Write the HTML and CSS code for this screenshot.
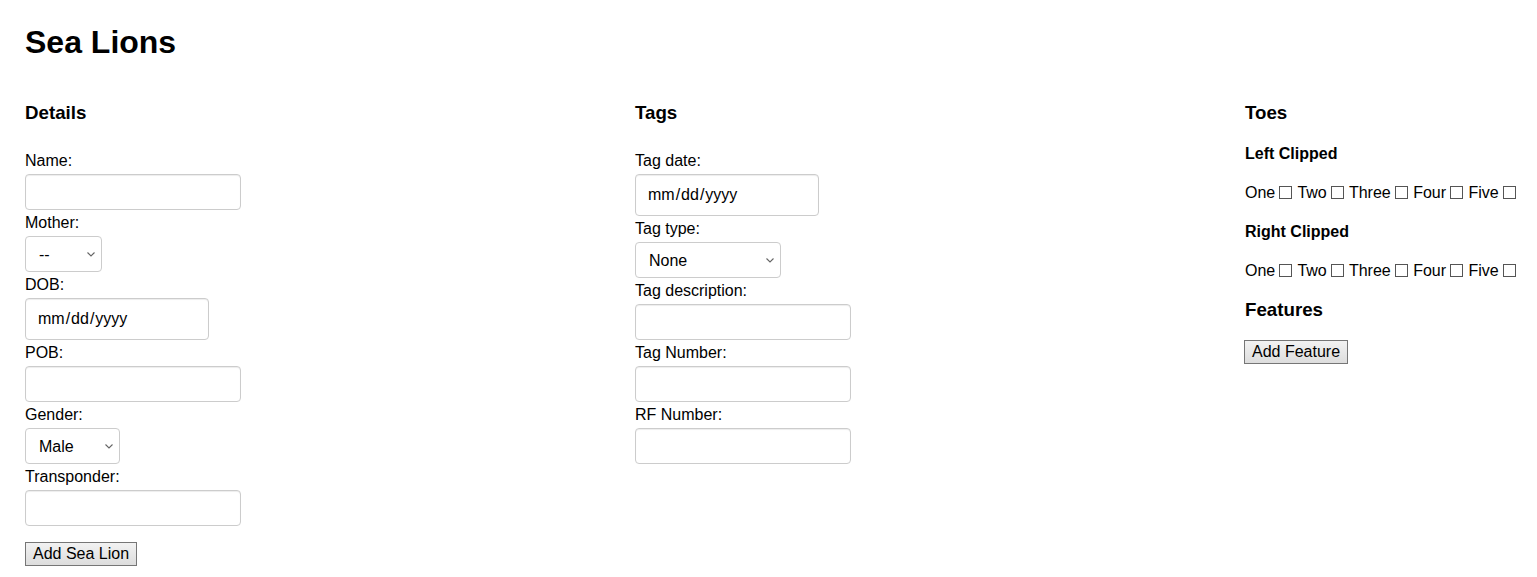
FILE: index.html
```html
<!DOCTYPE html>
<html lang="en">
<head>
<meta charset="utf-8">
<title>Sea Lions</title>
<link rel="stylesheet" href="styles.css">
</head>
<body>
<h1 class="page-title">Sea Lions</h1>
<div class="columns">
  <section class="col">
    <h3 class="col-title">Details</h3>
    <form class="fields">
      <label class="field-label">Name:</label>
      <input class="control text" type="text">
      <label class="field-label">Mother:</label>
      <select class="control select sel-mother"><option>--</option></select>
      <label class="field-label">DOB:</label>
      <input class="control date" type="date">
      <label class="field-label">POB:</label>
      <input class="control text" type="text">
      <label class="field-label">Gender:</label>
      <select class="control select sel-gender"><option>Male</option><option>Female</option></select>
      <label class="field-label">Transponder:</label>
      <input class="control text" type="text">
      <button class="btn btn-submit" type="button">Add Sea Lion</button>
    </form>
  </section>
  <section class="col">
    <h3 class="col-title">Tags</h3>
    <div class="fields">
      <label class="field-label">Tag date:</label>
      <input class="control date" type="date">
      <label class="field-label">Tag type:</label>
      <select class="control select sel-tag"><option>None</option></select>
      <label class="field-label">Tag description:</label>
      <input class="control text" type="text">
      <label class="field-label">Tag Number:</label>
      <input class="control text" type="text">
      <label class="field-label">RF Number:</label>
      <input class="control text" type="text">
    </div>
  </section>
  <section class="col">
    <h3 class="col-title">Toes</h3>
    <h4 class="sub-title">Left Clipped</h4>
    <div class="toe-row"><label>One<input class="toe" type="checkbox"></label> <label>Two<input class="toe" type="checkbox"></label> <label>Three<input class="toe" type="checkbox"></label> <label>Four<input class="toe" type="checkbox"></label> <label>Five<input class="toe" type="checkbox"></label></div>
    <h4 class="sub-title">Right Clipped</h4>
    <div class="toe-row"><label>One<input class="toe" type="checkbox"></label> <label>Two<input class="toe" type="checkbox"></label> <label>Three<input class="toe" type="checkbox"></label> <label>Four<input class="toe" type="checkbox"></label> <label>Five<input class="toe" type="checkbox"></label></div>
    <h3 class="section-title">Features</h3>
    <button class="btn btn-feature" type="button">Add Feature</button>
  </section>
</div>
</body>
</html>
```

FILE: styles.css
```css
html, body {
  margin: 0;
  padding: 0;
  background: #fff;
}
body {
  font-family: "Liberation Sans", Arial, sans-serif;
  font-size: 16px;
  color: #000;
  padding-left: 25px;
  overflow: hidden;
}
.page-title {
  font-size: 32px;
  line-height: 37px;
  font-weight: bold;
  margin: 24px 0 40px;
}
.columns {
  display: grid;
  grid-template-columns: 610px 610px 1fr;
}
.col {
  min-width: 0;
}
.col-title,
.section-title {
  font-size: 18.72px;
  line-height: normal;
  font-weight: bold;
  margin: 0;
}
.col-title {
  margin-top: 1px;
}
.section-title {
  margin-top: 19px;
}
.fields {
  display: flex;
  flex-direction: column;
  align-items: flex-start;
  margin-top: 24px;
}
.field-label {
  display: block;
  line-height: 18px;
  margin: 4px 0;
}
.control {
  box-sizing: border-box;
  font-family: "Liberation Sans", Arial, sans-serif;
  font-size: 16px;
  color: #000;
  background: #fff;
  border: 1px solid #ccc;
  border-radius: 4px;
  box-shadow: inset 0 1px 1px rgba(0, 0, 0, 0.075);
  margin: 0;
  outline: none;
}
.text {
  width: 216px;
  height: 36px;
  padding: 0 11px;
}
.date {
  width: 184px;
  height: 42px;
  padding: 0 11px;
}
.date::-webkit-calendar-picker-indicator {
  display: none;
}
.date::-webkit-inner-spin-button {
  display: none;
}
.date::-webkit-datetime-edit {
  padding: 0;
}
.select {
  -webkit-appearance: none;
  appearance: none;
  height: 36px;
  padding: 0 20px 0 13px;
  box-shadow: none;
  background-image: url("data:image/svg+xml;utf8,<svg xmlns='http://www.w3.org/2000/svg' width='8' height='5' viewBox='0 0 8 5'><polyline points='0.5,0.5 4,4 7.5,0.5' fill='none' stroke='%23666' stroke-width='1.1'/></svg>");
  background-repeat: no-repeat;
  background-position: right 6px center;
  background-size: 8px 5px;
}
.sel-mother { width: 77px; }
.sel-gender { width: 95px; }
.sel-tag { width: 146px; }
.btn {
  font-family: "Liberation Sans", Arial, sans-serif;
  font-size: 16px;
  line-height: 18px;
  color: #000;
  border: 1px solid #767676;
  border-radius: 0;
  background: linear-gradient(#f2f2f2, #dddddd);
  padding: 2px 7px 2px;
  margin: 0;
}
.btn-submit {
  margin-top: 16px;
}
.btn-feature {
  display: block;
  margin-top: 19px;
  margin-left: -1px;
}
.sub-title {
  font-size: 16px;
  line-height: normal;
  font-weight: bold;
  margin: 21px 0;
}
.toe-row {
  line-height: normal;
  white-space: nowrap;
}
.toe {
  -webkit-appearance: none;
  appearance: none;
  box-sizing: border-box;
  width: 13px;
  height: 13px;
  border: 1px solid #555;
  background: #fff;
  border-radius: 0;
  margin: 0 1px 0 4px;
  vertical-align: -1px;
}
```
